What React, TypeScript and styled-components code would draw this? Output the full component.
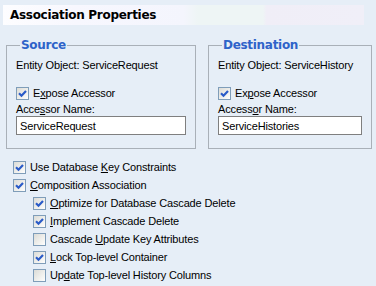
import React from "react";
import styled, { createGlobalStyle } from "styled-components";

const Global = createGlobalStyle`
  html, body { margin: 0; padding: 0; background: #e6eef7; }
  body { font-family: "Liberation Sans", Arial, sans-serif; font-size: 11px; color: #000; letter-spacing: -0.15px; }
`;

const Page = styled.div`
  width: 376px;
  height: 286px;
  padding: 5px 0 0 3px;
  box-sizing: border-box;
  display: flex;
  flex-direction: column;
`;

const Header = styled.div`
  width: 361px;
  height: 20px;
  box-sizing: border-box;
  padding-left: 7px;
  display: flex;
  align-items: center;
  font-family: "DejaVu Sans", Verdana, sans-serif;
  font-weight: bold;
  font-size: 12px;
  letter-spacing: -0.3px;
  background: linear-gradient(
    to right,
    #fdfdff 0%,
    #f7f7fe 20%,
    #f4f5fd 50%,
    #eef5f5 54%,
    #eef5f5 72%,
    #f0eef7 73%,
    #f0eff8 100%
  );
`;

const Groups = styled.div`
  display: flex;
  gap: 12px;
  margin-top: 13px;
  margin-left: 3px;
`;

const Group = styled.fieldset<{ $w: number }>`
  width: ${(p) => p.$w}px;
  box-sizing: border-box;
  margin: 0;
  padding: 6px 9px 9px 9px;
  border: 1px solid #a9b0b8;
  height: 111px;
  display: flex;
  flex-direction: column;
`;

const Legend = styled.legend`
  font-family: "DejaVu Sans", Verdana, sans-serif;
  font-weight: bold;
  font-size: 12px;
  color: #2e63c9;
  padding: 0 1px;
  margin-left: 4px;
  letter-spacing: -0.3px;
`;

const Line = styled.div<{ $gap?: number }>`
  height: 14px;
  line-height: 14px;
  white-space: nowrap;
  margin-bottom: ${(p) => p.$gap ?? 0}px;
`;

const CheckRow = styled.label<{ $indent?: number }>`
  display: flex;
  align-items: center;
  gap: 4px;
  height: 18px;
  white-space: nowrap;
  padding-left: ${(p) => p.$indent ?? 0}px;
`;

const Box = styled.span`
  width: 13px;
  height: 13px;
  box-sizing: border-box;
  border: 1px solid #7f9db9;
  background: linear-gradient(135deg, #dcdcd7 0%, #f7f7f5 80%, #ffffff 100%);
  display: inline-flex;
  align-items: center;
  justify-content: center;
  flex: none;
`;

const Field = styled.div<{ $w: number }>`
  width: ${(p) => p.$w}px;
  height: 19px;
  box-sizing: border-box;
  border: 1px solid #7f7f7f;
  background: #fff;
  padding-left: 3px;
  display: flex;
  align-items: center;
  white-space: nowrap;
`;

const Options = styled.div`
  display: flex;
  flex-direction: column;
  margin-top: 9px;
  margin-left: 10px;
`;

const U = styled.span`
  text-decoration: underline;
`;

const Check = ({ on }: { on: boolean }) => (
  <Box>
    {on && (
      <svg width="9" height="9" viewBox="0 0 9 9">
        <path d="M1 4.2 L3.5 6.7 L8 2" fill="none" stroke="#2a5bc8" strokeWidth="2.2" />
      </svg>
    )}
  </Box>
);

const Opt = ({ on, indent, children }: { on: boolean; indent?: number; children: React.ReactNode }) => (
  <CheckRow $indent={indent}>
    <Check on={on} />
    <span>{children}</span>
  </CheckRow>
);

export default function App() {
  return (
    <>
      <Global />
      <Page>
        <Header>Association Properties</Header>
        <Groups>
          <Group $w={189}>
            <Legend>Source</Legend>
            <Line $gap={12}>Entity Object: ServiceRequest</Line>
            <Opt on>
              E<U>x</U>pose Accessor
            </Opt>
            <Line>
              Acce<U>s</U>sor Name:
            </Line>
            <Field $w={170}>ServiceRequest</Field>
          </Group>
          <Group $w={164}>
            <Legend>Destination</Legend>
            <Line $gap={12}>Entity Object: ServiceHistory</Line>
            <Opt on>
              Ex<U>p</U>ose Accessor
            </Opt>
            <Line>
              Access<U>o</U>r Name:
            </Line>
            <Field $w={144}>ServiceHistories</Field>
          </Group>
        </Groups>
        <Options>
          <Opt on>
            Use Database <U>K</U>ey Constraints
          </Opt>
          <Opt on>
            <U>C</U>omposition Association
          </Opt>
          <Opt on indent={20}>
            <U>O</U>ptimize for Database Cascade Delete
          </Opt>
          <Opt on indent={20}>
            <U>I</U>mplement Cascade Delete
          </Opt>
          <Opt on={false} indent={20}>
            Cascade <U>U</U>pdate Key Attributes
          </Opt>
          <Opt on indent={20}>
            <U>L</U>ock Top-level Container
          </Opt>
          <Opt on={false} indent={20}>
            Up<U>d</U>ate Top-level History Columns
          </Opt>
        </Options>
      </Page>
    </>
  );
}
